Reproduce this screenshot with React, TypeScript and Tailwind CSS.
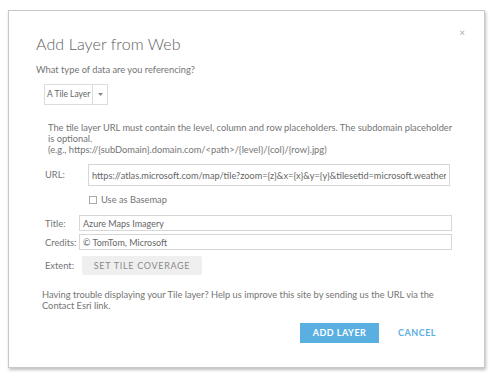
import React from 'react';

const font = { fontFamily: 'Lato, "Open Sans", sans-serif' };

const urlValue =
  'https://atlas.microsoft.com/map/tile?zoom={z}&x={x}&y={y}&tilesetid=microsoft.weather.radar.main&api-version=2.0';

export default function App() {
  return (
    <div className="w-[494px] h-[380px] bg-white pt-[10px] pl-[8px]" style={font}>
      <div className="relative w-[477px] h-[358px] bg-white border border-[#c8c8c8] shadow-[1px_2px_3px_rgba(0,0,0,0.25)] pt-[23px] pl-[27px] pr-[30px] text-[#747474]">
        <span className="absolute right-[19px] top-[16px] text-[10px] leading-none text-[#aaa]">×</span>
        <h2 className="text-[16px] leading-[20px] font-light text-[#5e5e5e] tracking-[0.1px]">Add Layer from Web</h2>
        <p className="mt-[10px] text-[9.3px] leading-[11px]">What type of data are you referencing?</p>

        <div className="mt-[9px] ml-[8px] flex h-[21px] w-[64px] border border-[#dcdcdc] text-[8.5px] leading-[19px] text-[#666]">
          <span className="px-[2px] border-r border-[#dcdcdc]">A Tile Layer</span>
          <span className="flex-1 flex items-center justify-center">
            <svg width="5" height="3" viewBox="0 0 5 3"><path d="M0 0 L5 0 L2.5 3 Z" fill="#888" /></svg>
          </span>
        </div>

        <div className="mt-[17px] ml-[12px] w-[406px] text-[9.3px] leading-[11px]">
          <p>The tile layer URL must contain the level, column and row placeholders. The subdomain placeholder is optional.</p>
          <p>(e.g., https://{'{subDomain}'}.domain.com/&lt;path&gt;/{'{level}'}/{'{col}'}/{'{row}'}.jpg)</p>
        </div>

        <div className="mt-[9px] ml-[9px] flex">
          <span className="w-[43px] pt-[5px] text-[9.3px] leading-[11px]">URL:</span>
          <div>
            <input
              readOnly
              value={urlValue}
              className="block w-[362px] h-[22px] border border-[#d6d6d6] px-[3px] text-[9.2px] text-[#666] outline-none"
              style={font}
            />
            <label className="mt-[8px] flex items-center gap-[4px] text-[9.3px] leading-[11px]">
              <span className="w-[8px] h-[8px] border border-[#aaa] ml-[1px]" />
              Use as Basemap
            </label>
          </div>
        </div>

        <div className="mt-[10px] ml-[9px] flex flex-col gap-[3px]">
          <div className="flex items-center">
            <span className="w-[34px] text-[9.3px] leading-[11px]">Title:</span>
            <input
              readOnly
              value="Azure Maps Imagery"
              className="block w-[373px] h-[16px] border border-[#d6d6d6] px-[3px] text-[9px] text-[#666] outline-none"
              style={font}
            />
          </div>
          <div className="flex items-center">
            <span className="w-[34px] text-[9.3px] leading-[11px]">Credits:</span>
            <input
              readOnly
              value="© TomTom, Microsoft"
              className="block w-[373px] h-[16px] border border-[#d6d6d6] px-[3px] text-[9px] text-[#666] outline-none"
              style={font}
            />
          </div>
          <div className="mt-[3px] flex items-center">
            <span className="w-[37px] text-[9.3px] leading-[11px]">Extent:</span>
            <span className="w-[120px] h-[19px] bg-[#efefef] rounded-[2px] text-center text-[9px] leading-[19px] tracking-[0.7px] text-[#8a8a8a]">SET TILE COVERAGE</span>
          </div>
        </div>

        <p className="mt-[14px] ml-[6px] w-[400px] text-[9.3px] leading-[11px]">
          Having trouble displaying your Tile layer? Help us improve this site by sending us the URL via the Contact Esri link.
        </p>

        <div className="mt-[12px] flex items-center justify-end pr-[18px] gap-[19px]">
          <span className="w-[79px] h-[20px] bg-[#5aafe1] text-white text-center text-[9px] leading-[20px] font-bold tracking-[0.5px]">ADD LAYER</span>
          <span className="text-[#5aafe1] text-[9px] font-bold tracking-[0.5px]">CANCEL</span>
        </div>
      </div>
    </div>
  );
}
